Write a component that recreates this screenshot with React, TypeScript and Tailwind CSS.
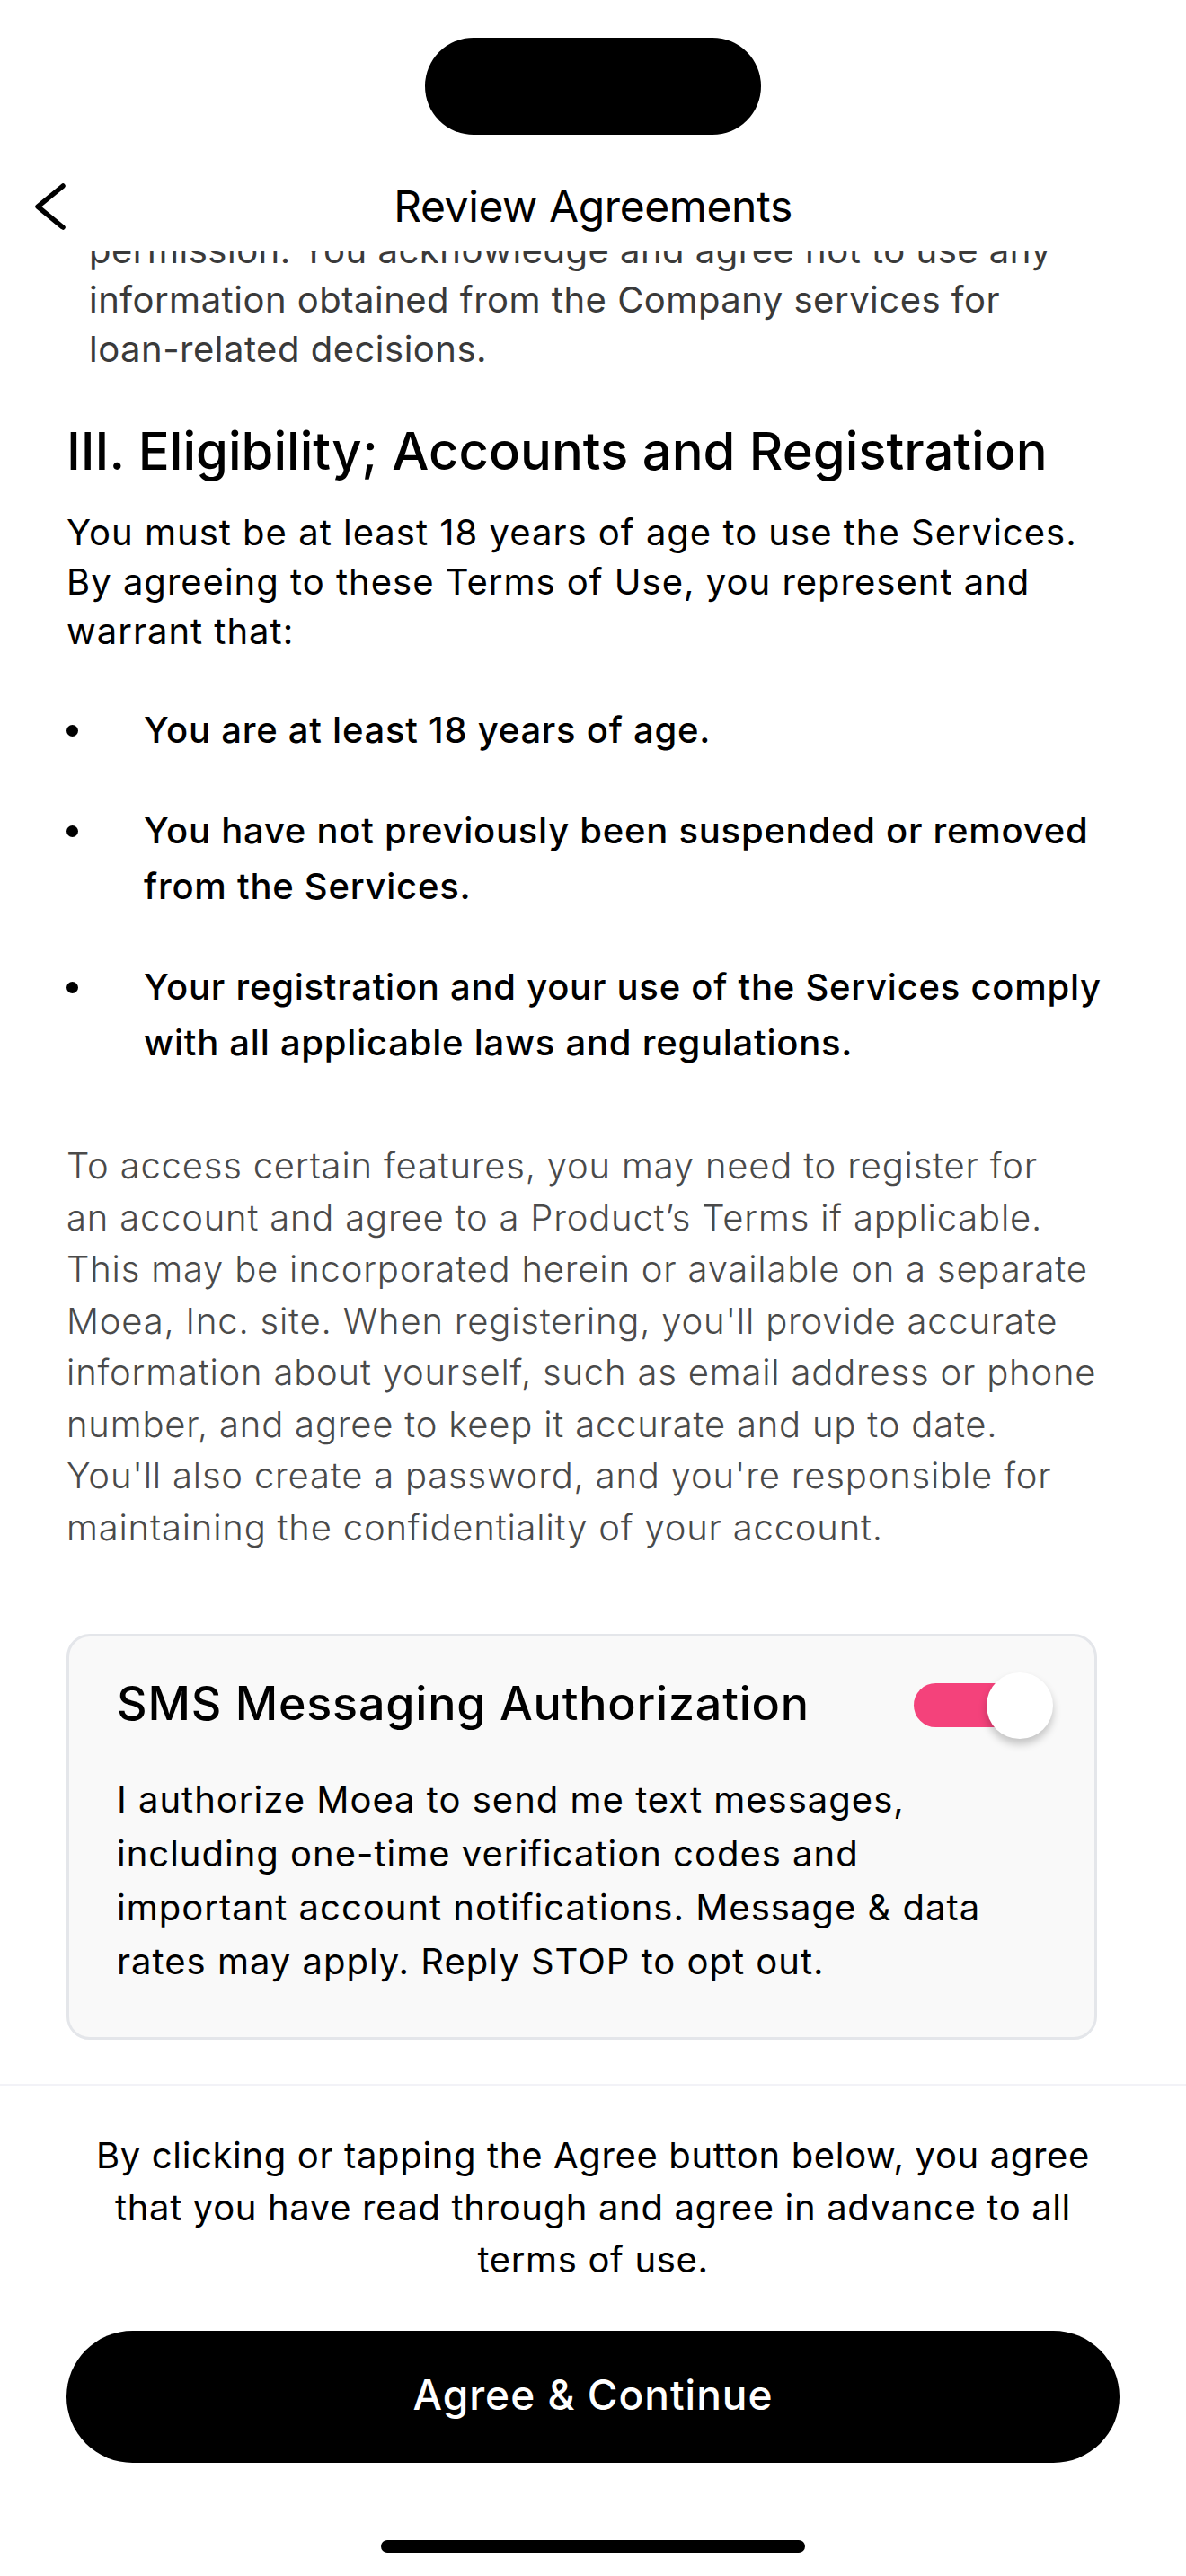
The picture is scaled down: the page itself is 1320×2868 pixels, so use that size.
import { useState } from "react";

const bullets = [
  "You are at least 18 years of age.",
  "You have not previously been suspended or removed from the Services.",
  "Your registration and your use of the Services comply with all applicable laws and regulations.",
];

function BackChevron() {
  return (
    <svg width="40" height="56" viewBox="0 0 40 56" fill="none">
      <polyline
        points="33,5 5,28 33,51"
        stroke="#000"
        strokeWidth="5.5"
        strokeLinecap="round"
        strokeLinejoin="round"
      />
    </svg>
  );
}

function Toggle({ on, onChange }: { on: boolean; onChange: () => void }) {
  return (
    <button
      type="button"
      onClick={onChange}
      className="relative w-[155px] h-[74px] shrink-0"
      aria-pressed={on}
    >
      <span
        className={`absolute left-0 top-[12px] w-[120px] h-[49px] rounded-full ${
          on ? "bg-[#f4427b]" : "bg-[#d4d4d8]"
        }`}
      />
      <span
        className={`absolute top-0 w-[74px] h-[74px] rounded-full bg-white shadow-[0_6px_10px_rgba(0,0,0,0.22)] ${
          on ? "right-0" : "left-0"
        }`}
      />
    </button>
  );
}

export default function App() {
  const [sms, setSms] = useState(true);

  return (
    <div className="w-[1320px] h-[2868px] bg-white flex flex-col overflow-hidden font-['Inter',sans-serif] text-black">
      {/* status area with the camera pill */}
      <div className="h-[185px] shrink-0 flex justify-center pt-[42px]">
        <div className="w-[374px] h-[108px] rounded-full bg-black" />
      </div>

      {/* nav bar */}
      <div className="h-[95px] shrink-0">
        <div className="h-[90px] grid grid-cols-[1fr_auto_1fr] items-center">
          <div className="pl-[37px] flex items-center">
            <BackChevron />
          </div>
          <h1 className="text-[48px] leading-[60px] font-normal tracking-[-0.4px]">
            Review Agreements
          </h1>
          <div />
        </div>
      </div>

      {/* scrolled agreement body */}
      <div className="flex-1 overflow-hidden">
        <div className="-mt-[29px] pl-[74px] pr-[94px]">
          <p className="pl-[25px] text-[40px] leading-[55px] tracking-[0.5px] text-[#3a3a3a]">
            permission. You acknowledge and agree not to use any information obtained from the
            Company services for <span className="whitespace-nowrap">loan-related</span> decisions.
          </p>

          <h2 className="mt-[51px] text-[58px] leading-[70px] font-medium">
            III. Eligibility; Accounts and Registration
          </h2>

          <p className="mt-[28px] text-[40px] leading-[55px] tracking-[1px]">
            You must be at least 18 years of age to use the Services. By agreeing to these Terms of
            Use, you represent and warrant that:
          </p>

          <ul className="mt-[52px] flex flex-col gap-[50px]">
            {bullets.map((b) => (
              <li key={b} className="flex items-start">
                <span className="w-[86px] shrink-0 h-[62px] flex items-center">
                  <span className="w-[13px] h-[13px] rounded-full bg-black" />
                </span>
                <span className="text-[40px] leading-[62px] font-medium tracking-[0.75px]">{b}</span>
              </li>
            ))}
          </ul>

          <p className="mt-[77px] text-[40px] leading-[57.5px] font-light tracking-[0.8px] text-[#4a4a4a]">
            To access certain features, you may need to register for{" "}
            <span className="whitespace-nowrap">an account</span> and agree to a Product’s Terms if
            applicable. This may be incorporated herein or available on a separate Moea, Inc. site.
            When registering, you'll provide accurate information about yourself, such as email
            address or phone number, and agree to keep it accurate and up to date. You'll also
            create a password, and you're responsible for maintaining the confidentiality of your
            account.
          </p>

          <div className="mt-[90px] mr-[5px] rounded-[26px] border-[3px] border-[#e4e6ea] bg-[#f9f9f9] pl-[53px] pr-[46px] pt-[40px] pb-[54px]">
            <div className="flex items-center justify-between">
              <h3 className="text-[52px] leading-[64px] font-medium tracking-[0.8px] -mt-[4px]">
                SMS Messaging Authorization
              </h3>
              <Toggle on={sms} onChange={() => setSms(!sms)} />
            </div>
            <p className="mt-[38px] text-[40px] leading-[60px] tracking-[1px] pr-[60px]">
              I authorize Moea to send me text messages, including one-time verification codes and
              important account notifications. Message &amp; data rates may apply. Reply STOP to opt
              out.
            </p>
          </div>
        </div>
      </div>

      {/* agree footer */}
      <div className="shrink-0 border-t-[3px] border-[#f2f2f7] bg-white h-[548px] flex flex-col items-center">
        <p className="mt-[48px] w-[1130px] text-center text-[40px] leading-[58px] tracking-[0.65px]">
          By clicking or tapping the Agree button below, you agree that you have read through and
          agree in advance to all terms of use.
        </p>
        <button
          type="button"
          className="mt-[50px] w-[1172px] h-[147px] rounded-full bg-black text-white text-[46px] font-medium tracking-[1px] pb-[4px]"
        >
          Agree &amp; Continue
        </button>
        <div className="mt-auto mb-[26px] w-[472px] h-[14px] rounded-full bg-black" />
      </div>
    </div>
  );
}
